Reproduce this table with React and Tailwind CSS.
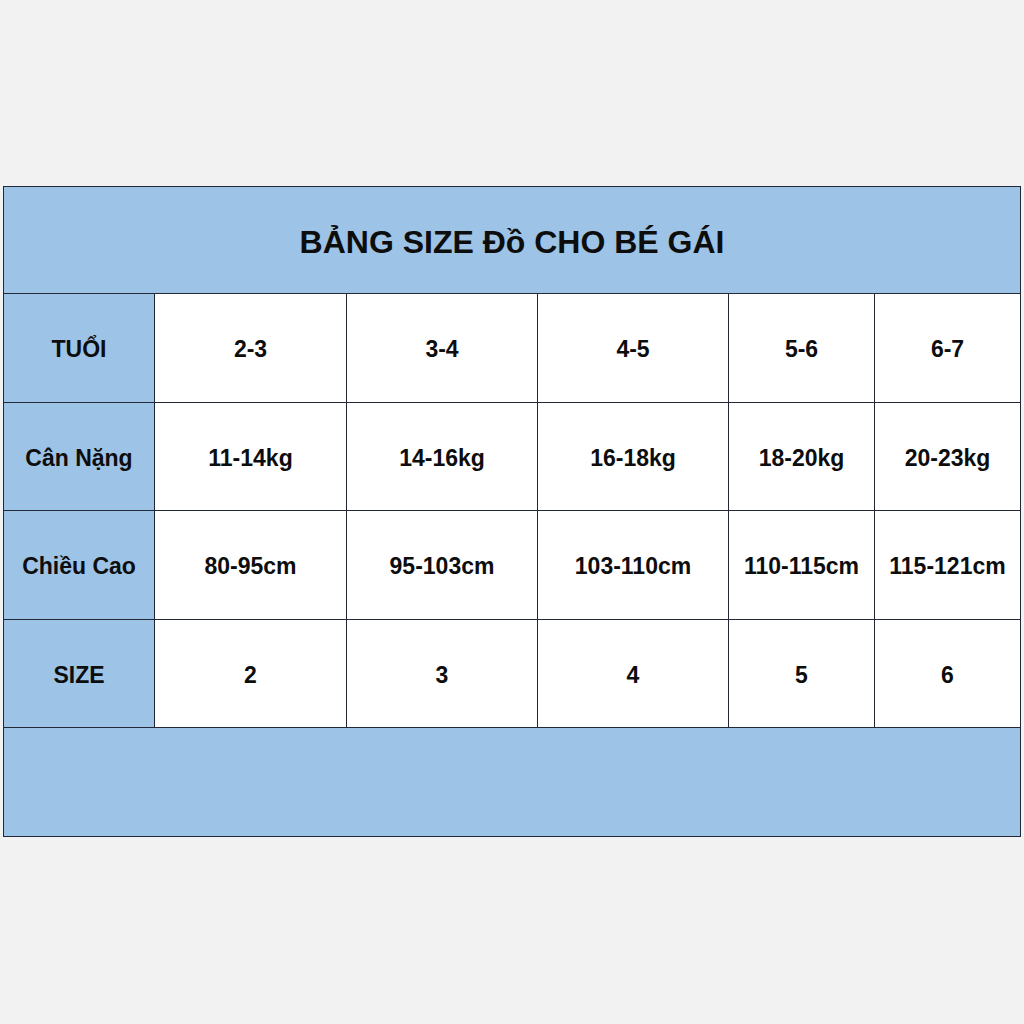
const cols = "grid grid-cols-[151px_192px_191px_191px_146px_145px]"

const rows = [
  ["TUỔI", "2-3", "3-4", "4-5", "5-6", "6-7"],
  ["Cân Nặng", "11-14kg", "14-16kg", "16-18kg", "18-20kg", "20-23kg"],
  ["Chiều Cao", "80-95cm", "95-103cm", "103-110cm", "110-115cm", "115-121cm"],
  ["SIZE", "2", "3", "4", "5", "6"],
]

const Row = ({ cells }) => (
  <div className={`${cols} h-[108.5px] border-b-[1.5px] border-[#222836]`}>
    {cells.map((c, i) => (
      <div
        key={i}
        className={`flex items-center justify-center pt-[3px] text-[23px] font-bold text-[#0d0d0d] ${
          i === 0 ? "bg-[#9dc3e6]" : "bg-white"
        } ${i < cells.length - 1 ? "border-r-[1.5px] border-[#222836]" : ""}`}
      >
        {c}
      </div>
    ))}
  </div>
)

export default function App() {
  return (
    <div
      className="min-h-[1024px] w-[1024px] bg-[#f2f2f2] pt-[186px] pl-[3px]"
      style={{ fontFamily: '"Liberation Sans", Arial, sans-serif' }}
    >
      <div className="w-[1018px] border-[1.5px] border-[#222836]">
        <div className="h-[107px] bg-[#9dc3e6] flex items-center justify-center pt-[4px] border-b-[1.5px] border-[#222836] text-[32px] font-bold text-[#0d0d0d]">
          BẢNG SIZE Đồ CHO BÉ GÁI
        </div>
        {rows.map((r, i) => (
          <Row key={i} cells={r} />
        ))}
        <div className="h-[108px] bg-[#9dc3e6]"></div>
      </div>
    </div>
  )
}
